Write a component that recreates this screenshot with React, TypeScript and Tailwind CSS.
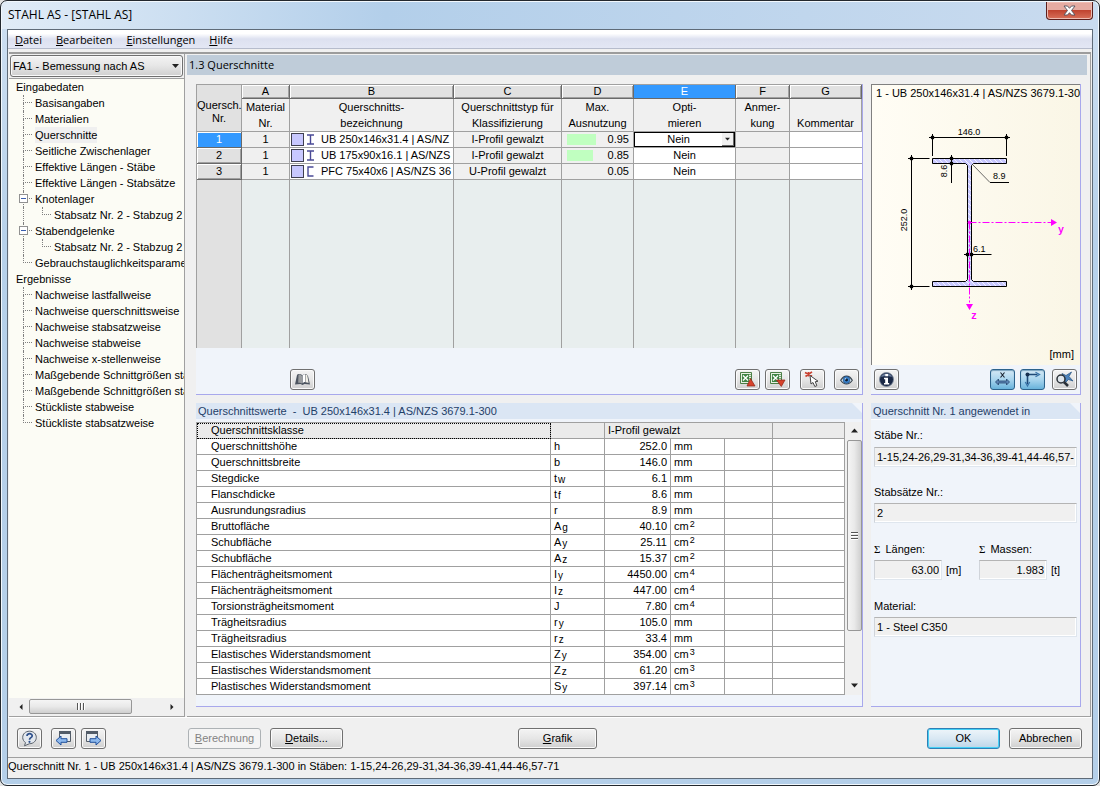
import React, { useState } from 'react';

interface TreeItem {
  label: string;
  depth: 0 | 1 | 2;
  last?: boolean;
  open?: boolean;
}

interface Section {
  nr: number;
  material: number;
  shape: 'I' | 'U';
  name: string;
  type: string;
  ratio: string;
}

interface Property {
  name: string;
  symbol: string;
  sub?: string;
  value: string;
  unit: string;
  power?: string;
}

const TREE: TreeItem[] = [
  { label: 'Eingabedaten', depth: 0 },
  { label: 'Basisangaben', depth: 1 },
  { label: 'Materialien', depth: 1 },
  { label: 'Querschnitte', depth: 1 },
  { label: 'Seitliche Zwischenlager', depth: 1 },
  { label: 'Effektive Längen - Stäbe', depth: 1 },
  { label: 'Effektive Längen - Stabsätze', depth: 1 },
  { label: 'Knotenlager', depth: 1, open: true },
  { label: 'Stabsatz Nr. 2 - Stabzug 2', depth: 2, last: true },
  { label: 'Stabendgelenke', depth: 1, open: true },
  { label: 'Stabsatz Nr. 2 - Stabzug 2', depth: 2, last: true },
  { label: 'Gebrauchstauglichkeitsparamet', depth: 1, last: true },
  { label: 'Ergebnisse', depth: 0 },
  { label: 'Nachweise lastfallweise', depth: 1 },
  { label: 'Nachweise querschnittsweise', depth: 1 },
  { label: 'Nachweise stabsatzweise', depth: 1 },
  { label: 'Nachweise stabweise', depth: 1 },
  { label: 'Nachweise x-stellenweise', depth: 1 },
  { label: 'Maßgebende Schnittgrößen sta', depth: 1 },
  { label: 'Maßgebende Schnittgrößen sta', depth: 1 },
  { label: 'Stückliste stabweise', depth: 1 },
  { label: 'Stückliste stabsatzweise', depth: 1, last: true },
];

const COLUMNS = [
  { letter: 'A', lines: ['Material', 'Nr.'] },
  { letter: 'B', lines: ['Querschnitts-', 'bezeichnung'] },
  { letter: 'C', lines: ['Querschnittstyp für', 'Klassifizierung'] },
  { letter: 'D', lines: ['Max.', 'Ausnutzung'] },
  { letter: 'E', lines: ['Opti-', 'mieren'] },
  { letter: 'F', lines: ['Anmer-', 'kung'] },
  { letter: 'G', lines: ['', 'Kommentar'] },
];

const SECTIONS: Section[] = [
  { nr: 1, material: 1, shape: 'I', name: 'UB 250x146x31.4 | AS/NZ', type: 'I-Profil gewalzt', ratio: '0.95' },
  { nr: 2, material: 1, shape: 'I', name: 'UB 175x90x16.1 | AS/NZS', type: 'I-Profil gewalzt', ratio: '0.85' },
  { nr: 3, material: 1, shape: 'U', name: 'PFC 75x40x6 | AS/NZS 36', type: 'U-Profil gewalzt', ratio: '0.05' },
];

const PROPERTIES: Property[] = [
  { name: 'Querschnittshöhe', symbol: 'h', value: '252.0', unit: 'mm' },
  { name: 'Querschnittsbreite', symbol: 'b', value: '146.0', unit: 'mm' },
  { name: 'Stegdicke', symbol: 't', sub: 'w', value: '6.1', unit: 'mm' },
  { name: 'Flanschdicke', symbol: 't', sub: 'f', value: '8.6', unit: 'mm' },
  { name: 'Ausrundungsradius', symbol: 'r', value: '8.9', unit: 'mm' },
  { name: 'Bruttofläche', symbol: 'A', sub: 'g', value: '40.10', unit: 'cm', power: '2' },
  { name: 'Schubfläche', symbol: 'A', sub: 'y', value: '25.11', unit: 'cm', power: '2' },
  { name: 'Schubfläche', symbol: 'A', sub: 'z', value: '15.37', unit: 'cm', power: '2' },
  { name: 'Flächenträgheitsmoment', symbol: 'I', sub: 'y', value: '4450.00', unit: 'cm', power: '4' },
  { name: 'Flächenträgheitsmoment', symbol: 'I', sub: 'z', value: '447.00', unit: 'cm', power: '4' },
  { name: 'Torsionsträgheitsmoment', symbol: 'J', value: '7.80', unit: 'cm', power: '4' },
  { name: 'Trägheitsradius', symbol: 'r', sub: 'y', value: '105.0', unit: 'mm' },
  { name: 'Trägheitsradius', symbol: 'r', sub: 'z', value: '33.4', unit: 'mm' },
  { name: 'Elastisches Widerstandsmoment', symbol: 'Z', sub: 'y', value: '354.00', unit: 'cm', power: '3' },
  { name: 'Elastisches Widerstandsmoment', symbol: 'Z', sub: 'z', value: '61.20', unit: 'cm', power: '3' },
  { name: 'Plastisches Widerstandsmoment', symbol: 'S', sub: 'y', value: '397.14', unit: 'cm', power: '3' },
];

const raised = 'border border-[#707070] rounded-[3px] bg-linear-to-b from-[#f4f4f4] via-[#e6e6e6] to-[#cfcfcf] shadow-[inset_0_0_0_1px_#fafafa]';
const pressed = 'border border-[#2c628b] rounded-[3px] bg-linear-to-b from-[#d5e9f5] via-[#a9d5ee] to-[#68b3db] shadow-[inset_0_1px_1px_#7ba4bf]';
const line = 'border-[#a0a0a0]';
const bevel = 'bg-[#e1e1e1] border-[#696969] shadow-[inset_1px_1px_0_#ffffff,inset_-1px_-1px_0_#a0a0a0]';

const IconButton: React.FC<{ label: string; className?: string; active?: boolean; children: React.ReactNode }> = ({ label, className = '', active, children }) => (
  <button type="button" aria-label={label} className={`flex h-[21px] w-[25px] shrink-0 items-center justify-center ${active ? pressed : raised} ${className}`}>
    {children}
  </button>
);

const BookIcon = () => (
  <svg width="17" height="15" viewBox="0 0 17 15">
    <path d="M1 12.5 3 3 4 2l3 .3 1.5 1.2L10 2l2.500 .3L14 4l2 8.500-5.500-.5-2 1-2-1z" fill="#4d5560" />
    <path d="M4.500 2.500c1.500-.3 3 .2 3.500 1.500v7.500c-1-1-2.500-1-3.800-.7z" fill="#9a9d9f" />
    <path d="M8.600 4c.4-1.400 1.500-2 2.500-1.700V10c-1 0-2 .5-2.500 1.500z" fill="#fff" />
    <path d="M11.500 2.500c.8 0 1.400.3 1.800 1l1.300 7.500c-1-.6-2-.8-3.100-.8z" fill="#f3f1e8" />
  </svg>
);

const ExcelIcon: React.FC<{ dir: 'up' | 'down' }> = ({ dir }) => (
  <svg width="17" height="17" viewBox="0 0 17 17">
    <path d="M1.500 1.500h11v11h-11z" fill="#e8f0e4" stroke="#4c7f46" />
    <path d="M10 3.500h2M10 5.500h2M10 7.500h2" stroke="#79a373" />
    <path d="M3 3h7v8H3z" fill="#3f8443" />
    <path d="m4 4.500 5 5m0-5-5 5" stroke="#fff" strokeWidth="1.400" />
    {dir === 'up' ? (
      <path d="M11.500 7.500 16 15H8z" fill="#d6422b" stroke="#8c2415" strokeWidth=".7" />
    ) : (
      <path d="M7.500 9H16l-3.700 6.500z" fill="#d6422b" stroke="#8c2415" strokeWidth=".7" />
    )}
  </svg>
);

const PickIcon = () => (
  <svg width="17" height="17" viewBox="0 0 17 17">
    <path d="M1 1.500 8 5M8 .8 1.500 5.500M4.500 1v4.500" stroke="#c9402f" strokeWidth="1.600" />
    <path d="M6 4.500 7 13l2-1.500 1.800 4 2-.8-1.500-4 2.700-.5z" fill="#fff" stroke="#444" />
  </svg>
);

const EyeIcon = () => (
  <svg width="13" height="10" viewBox="0 0 15 11">
    <path d="M.8 5.800C3 2.200 5 1 7.500 1s4.700 1.200 6.700 4.800C12.200 8.800 10 10 7.500 10S2.800 8.800.8 5.800z" fill="#dbe7ef" stroke="#38434d" strokeWidth="1.300" />
    <circle cx="7.500" cy="5.400" r="3.900" fill="#3d86cf" stroke="#1d4a82" strokeWidth=".7" />
    <circle cx="7.500" cy="5.400" r="1.700" fill="#0b1a30" />
    <circle cx="6.500" cy="4.200" r=".8" fill="#fff" />
  </svg>
);

const InfoIcon = () => (
  <svg width="17" height="17" viewBox="0 0 17 17">
    <circle cx="8.500" cy="8.500" r="7" fill="#1b2946" stroke="#7a8799" strokeWidth=".8" />
    <path d="M3 6a6 6 0 0 1 11 0c-4-1.500-7-1.500-11 0z" fill="#6c7f9f" />
    <path d="M7.300 3h2.700v2.300H7.300zM6 6.800h4V12h1.200v1.500H6V12h1.200V8.300H6z" fill="#fff" />
  </svg>
);

const DimensionIcon = () => (
  <svg width="17" height="17" viewBox="0 0 17 17">
    <path d="m6.500 1.500 4 5m0-5-4 5" stroke="#17202c" strokeWidth="1.100" />
    <path d="m1.500 11 3-3v2h8V8l3 3-3 3v-2h-8v2z" fill="#5c86b5" stroke="#27456e" strokeWidth=".8" />
  </svg>
);

const AxesIcon = () => (
  <svg width="19" height="17" viewBox="0 0 19 17">
    <path d="M4.500 3.500h10M4.500 3.500V13" stroke="#1f4a77" strokeWidth="1.600" />
    <path d="m12.500 1.200 4 2.300-4 2.300M2.300 11l2.200 4 2.200-4" fill="none" stroke="#3974a9" strokeWidth="1.300" />
    <circle cx="4.500" cy="3.500" r="2" fill="#17304f" />
  </svg>
);

const ZoomAllIcon = () => (
  <svg width="19" height="17" viewBox="0 0 19 17">
    <path d="m7 2.500 4 2 5.500-3.500-2.500 4.500L18 10l-4.500-1.500L9 13l1-5z" fill="#4d83bd" stroke="#23527f" strokeWidth=".7" />
    <circle cx="6" cy="8" r="4" fill="#dce6ee" fillOpacity=".7" stroke="#2b3138" strokeWidth="1.500" />
    <path d="m9 11 4 4" stroke="#2b3138" strokeWidth="2.500" />
  </svg>
);

const HelpIcon = () => (
  <svg width="17" height="17" viewBox="0 0 17 17">
    <path d="M8.500 1.200c4 0 6.800 2.700 6.800 6.200s-2.800 6.300-6.800 6.300L3.500 15.800l1-3.200C2.800 11.500 1.700 9.700 1.700 7.400c0-3.500 2.800-6.200 6.800-6.200z" fill="#e3e8ee" stroke="#59616b" />
    <path d="M6 6c0-3.200 5.400-3 5.200 0C11 7.800 8.500 7.600 8.500 9.700" fill="none" stroke="#2d4f8b" strokeWidth="1.700" />
    <circle cx="8.500" cy="11.800" r="1.100" fill="#2d4f8b" />
  </svg>
);

const StepIcon: React.FC<{ dir: 'back' | 'next' }> = ({ dir }) => (
  <svg width="17" height="17" viewBox="0 0 17 17">
    <path d={dir === 'back' ? 'M4.500 1.500h11v10h-11z' : 'M1.500 1.500h11v10h-11z'} fill="#e9edf1" stroke="#525c68" />
    <path d={dir === 'back' ? 'M4 1h12v3H4z' : 'M1 1h12v3H1z'} fill="#525c68" />
    {dir === 'back' ? (
      <path d="M1 10.500 6 6v2.700h6v3.600H6V15z" fill="#8db9ee" stroke="#20509c" />
    ) : (
      <path d="M16 10.500 11 6v2.700H5v3.600h6V15z" fill="#8db9ee" stroke="#20509c" />
    )}
  </svg>
);

const ShapeIcon: React.FC<{ shape: 'I' | 'U' }> = ({ shape }) => (
  <svg width="9" height="11" viewBox="0 0 9 11" className="ml-[2px] shrink-0">
    <path d={shape === 'I' ? 'M1 1h7M1 10h7M4.500 1v9' : 'M7.500 1H2v9h5.500'} fill="none" stroke="#4a4a96" strokeWidth="1.400" />
  </svg>
);

const Caret: React.FC<{ className?: string; d?: string }> = ({ className = '', d = 'M0 0h7L3.500 4z' }) => (
  <svg width="7" height="7" viewBox="0 -1 7 7" className={className}>
    <path d={d} fill="#222" />
  </svg>
);

const Branch: React.FC<{ last?: boolean }> = ({ last }) => (
  <span className="mr-[3px] flex h-4 w-[9px] shrink-0 flex-col">
    <span className="h-2 border-b border-l border-dotted border-[#808080]" />
    {!last && <span className="h-2 border-l border-dotted border-[#808080]" />}
  </span>
);

const Sidebar: React.FC = () => {
  const [selected, setSelected] = useState(3);

  return (
    <aside className="flex w-[176px] shrink-0 flex-col border-r border-b border-[#a0a0a0] bg-[#f0f0f0]">
      <div className="relative m-px mb-0 h-[22px]">
        <select aria-label="Bemessungsfall" className={`h-full w-full appearance-none px-[2px] text-[11px] ${raised}`}>
          <option>FA1 - Bemessung nach AS</option>
        </select>
        <Caret className="pointer-events-none absolute top-2 right-1" />
      </div>
      <ul className={`mt-px flex-1 overflow-hidden border-t bg-[#fcfcf5] ${line}`}>
        {TREE.map((item, i) => (
          <li key={i} className={`relative flex h-4 ${item.depth === 0 ? 'pl-[7px]' : 'pl-[14px]'}`}>
            {item.depth === 1 && <Branch last={item.last} />}
            {item.depth === 2 && (
              <>
                <span className="w-[19px] shrink-0 border-l border-dotted border-[#808080]" />
                <Branch last={item.last} />
              </>
            )}
            {item.open && (
              <span className="absolute top-[3px] left-[10px] flex size-[9px] items-center justify-center border border-[#919191] bg-white">
                <span className="h-px w-[5px] bg-[#3b5fae]" />
              </span>
            )}
            <button
              type="button"
              onClick={() => setSelected(i)}
              className={`h-4 whitespace-nowrap leading-4 ${selected === i ? 'bg-[#f0f0f0]' : ''}`}
            >
              {item.label}
            </button>
          </li>
        ))}
      </ul>
      <div className="mb-px flex h-[17px] items-center bg-[#f0f0f0] px-1">
        <Caret className="w-[16px]" d="M5 0v6L2 3z" />
        <div className="flex h-[15px] w-[103px] items-center justify-center gap-px rounded-[2px] border border-[#979797] bg-linear-to-b from-[#f5f5f5] via-[#e9e9e9] to-[#cfcfcf]">
          {[0, 1, 2].map((n) => (
            <span key={n} className="h-[7px] w-[2px] border-l border-[#555] bg-white" />
          ))}
        </div>
        <Caret className="ml-auto w-[16px]" d="M2 0v6L5 3z" />
      </div>
    </aside>
  );
};

const SectionTable: React.FC = () => (
  <table className={`w-full table-fixed border-separate border-spacing-0 border-t border-l text-center leading-[15px] ${line}`}>
    <colgroup>
      <col className="w-[45px]" />
      <col className="w-[48px]" />
      <col />
      <col className="w-[108px]" />
      <col className="w-[72px]" />
      <col className="w-[102px]" />
      <col className="w-[54px]" />
      <col className="w-[72px]" />
    </colgroup>
    <thead>
      <tr className="h-[14px]">
        <th rowSpan={2} className={`border-r border-b bg-[#e1e1e1] p-0 pt-2 font-normal leading-[13px] ${line}`}>
          Quersch.<br />Nr.
        </th>
        {COLUMNS.map((c) => (
          <th key={c.letter} className={`h-[14px] border-r border-b p-0 font-normal leading-[13px] ${c.letter === 'E' ? 'border-[#696969] bg-[#3399ff] text-white' : bevel}`}>
            {c.letter}
          </th>
        ))}
      </tr>
      <tr>
        {COLUMNS.map((c) => (
          <th key={c.letter} className={`h-[33px] border-r border-b bg-[#f0f0f0] p-0 align-top font-normal whitespace-nowrap leading-4 ${line}`}>
            {c.lines[0] || '\u00a0'}<br />{c.lines[1]}
          </th>
        ))}
      </tr>
    </thead>
    <tbody>
      {SECTIONS.map((s, i) => (
        <tr key={s.nr} className="h-4">
          <th className={`border-r border-b p-0 font-normal ${i === 0 ? 'border-[#696969] bg-[#3399ff] text-white shadow-[inset_1px_1px_0_#ffffff]' : bevel}`}>{s.nr}</th>
          <td className={`border-r border-b bg-[#f0f0f0] p-0 ${line}`}>{s.material}</td>
          <td className={`border-r border-b bg-white p-0 ${line}`}>
            <div className="flex h-[15px] items-center overflow-hidden pl-px whitespace-nowrap">
              <span className="size-[13px] shrink-0 border border-[#404050] bg-[#c8c8ff]" />
              <ShapeIcon shape={s.shape} />
              <span className="ml-[6px]">{s.name}</span>
            </div>
          </td>
          <td className={`border-r border-b bg-[#f0f0f0] p-0 ${line}`}>{s.type}</td>
          <td className={`border-r border-b bg-[#f0f0f0] p-0 ${line}`}>
            <div className="flex h-[15px] items-center justify-between px-[4px] pl-[5px]">
              <span className="h-[11px] bg-[#c0ffc0]" style={{ width: Number(s.ratio) > 0.1 ? Math.round(Number(s.ratio) * 30) : 0 }} />
              {s.ratio}
            </div>
          </td>
          <td className={`border-r border-b bg-white p-0 ${line}`}>
            {i === 0 ? (
              <div className="flex h-[15px] border border-black">
                <select aria-label="Optimieren" className="h-[13px] min-w-0 flex-1 appearance-none text-center text-[11px] leading-[13px]">
                  <option>Nein</option>
                  <option>Ja</option>
                </select>
                <span className="flex h-[13px] w-[12px] items-center justify-center border-r border-b border-[#696969] bg-[#f0f0f0]">
                  <Caret className="h-[7px] w-[5px]" />
                </span>
              </div>
            ) : (
              'Nein'
            )}
          </td>
          <td className={`border-r border-b bg-[#f0f0f0] p-0 ${line}`} />
          <td className={`border-b bg-white p-0 ${line}`} />
        </tr>
      ))}
      <tr>
        <td className={`h-[168px] border-r bg-[#e1e1e1] ${line}`} />
        {COLUMNS.map((c) => (
          <td key={c.letter} className={`bg-[#e8eeee] ${c.letter === 'G' ? '' : 'border-r'} ${line}`} />
        ))}
      </tr>
    </tbody>
  </table>
);

const PropertyTable: React.FC = () => {
  const cell = `border-r border-b px-[3px] py-0 ${line}`;
  return (
    <table className={`min-w-0 flex-1 table-fixed border-separate border-spacing-0 border-t border-l bg-white leading-[15px] ${line}`}>
      <colgroup>
        <col />
        <col className="w-[54px]" />
        <col className="w-[66px]" />
        <col className="w-[54px]" />
        <col className="w-[48px]" />
        <col className="w-[72px]" />
      </colgroup>
      <tbody>
        <tr className="h-4 bg-[#ebebeb]">
          <td className={`border-r border-b p-0 pl-[14px] outline-1 -outline-offset-1 outline-dotted outline-black ${line}`}>Querschnittsklasse</td>
          <td className={cell} />
          <td colSpan={3} className={cell}>I-Profil gewalzt</td>
          <td className={cell} />
        </tr>
        {PROPERTIES.map((p, i) => (
          <tr key={i} className="h-4">
            <td className={`border-r border-b p-0 pl-[14px] ${line}`}>{p.name}</td>
            <td className={cell}>
              <div className="flex h-[15px] gap-px">
                {p.symbol}
                {p.sub && <span className="pt-[2px] text-[10px] leading-[13px]">{p.sub}</span>}
              </div>
            </td>
            <td className={`${cell} text-right`}>{p.value}</td>
            <td className={cell}>
              <div className="flex h-[15px] gap-px">
                {p.unit}
                {p.power && <span className="text-[9px] leading-[11px]">{p.power}</span>}
              </div>
            </td>
            <td className={cell} />
            <td className={cell} />
          </tr>
        ))}
      </tbody>
    </table>
  );
};

// Dimensioned drawing of the selected profile, one unit per pixel.
const ProfileDrawing: React.FC = () => {
  const ticks = [[60.5, 35.5], [134.5, 35.5], [39.5, 56.5], [39.5, 184.5], [79.5, 56.5], [79.5, 61.5], [95.5, 152.5], [99.5, 152.5]];
  return (
    <svg viewBox="0 0 208 244" className="h-[244px] w-full" fontFamily="'Liberation Sans', Arial, sans-serif" fontSize="9">
      <defs>
        <pattern id="hatch" width="5" height="5" patternUnits="userSpaceOnUse">
          <path d="M0 0h5v5H0z" fill="#c8c8ff" />
          <path d="m-1-1 7 7" stroke="#fff" strokeWidth=".8" />
        </pattern>
      </defs>
      <path
        d="M60.500 56.500h74v5H101.500l-2 2v114l2 2h33v5h-74v-5h33l2-2v-114l-2-2h-33z"
        fill="url(#hatch)"
        stroke="#000"
      />
      <g stroke="#000" fill="none">
        <path d="M57 35.500h81M60.500 32v22M134.500 32v22" />
        <path d="M39.500 53v135M36 56.500h21.500M36 184.500h21.500" />
        <path d="M79.500 53v28" />
        <path d="M92 152.500h27.500" />
        <path d="M118 80.500h19" />
        <path d="m100 62 18 18.500" stroke="#444" strokeWidth=".8" />
      </g>
      {ticks.map(([x, y]) => (
        <circle key={`${x}-${y}`} cx={x} cy={y} r="1.900" />
      ))}
      <text x="97" y="33" textAnchor="middle">146.0</text>
      <text transform="translate(35 118) rotate(-90)" textAnchor="middle">252.0</text>
      <text transform="translate(75 69) rotate(-90)" textAnchor="middle">8.6</text>
      <text x="121" y="77">8.9</text>
      <text x="101" y="150">6.1</text>
      <g stroke="#ff00ff" fill="#ff00ff">
        <path d="M97.500 120.500h82M97.500 120.500v80" fill="none" strokeDasharray="7 2 2 2" />
        <path d="M179 117v7l6-3.500zM94 202h7l-3.500 6z" stroke="none" />
        <circle cx="97.500" cy="120.500" r="1.800" stroke="none" />
      </g>
      <g fill="#ff00ff" fontFamily="'Liberation Mono', monospace" fontSize="10" fontWeight="bold">
        <text x="186" y="131">y</text>
        <text x="99" y="217">z</text>
      </g>
    </svg>
  );
};

const PanelTitle: React.FC<{ children: React.ReactNode }> = ({ children }) => (
  <h2 className="h-4 bg-[#dbe6f4] pl-[2px] leading-4 text-[#1f4068] [clip-path:polygon(0_0,calc(100%-10px)_0,100%_10px,100%_100%,0_100%)]">
    {children}
  </h2>
);

const panel = 'flex flex-col border-r border-b border-[#a8a8ec] bg-[#f0f4fa]';
const field = 'h-5 border border-t-[#b4b4b4] border-r-[#dfe6ee] border-b-[#dfe6ee] border-l-[#d0d4da] bg-[#f0f0f0] px-[2px] text-[11px] shadow-[inset_-1px_-1px_0_#ffffff]';
const pushButton = `h-[21px] shrink-0 ${raised}`;

const UsagePanel: React.FC = () => (
  <section className={`w-[210px] shrink-0 ${panel}`}>
    <PanelTitle>Querschnitt Nr. 1 angewendet in</PanelTitle>
    <div className="flex flex-col border-t border-white px-[3px] pt-[7px]">
      <label htmlFor="members" className="h-5 leading-4">Stäbe Nr.:</label>
      <input id="members" readOnly defaultValue="1-15,24-26,29-31,34-36,39-41,44-46,57-71" className={field} />
      <label htmlFor="sets" className="mt-[17px] h-[19px] leading-4">Stabsätze Nr.:</label>
      <input id="sets" readOnly defaultValue="2" className={field} />
      <div className="mt-[18px] flex">
        <div className="w-[105px]">
          <label htmlFor="lengths" className="block h-[19px] leading-4"><span className="pr-[5px] font-['Liberation_Serif']">Σ</span>Längen:</label>
          <input id="lengths" readOnly defaultValue="63.00" className={`w-[68px] text-right ${field}`} />
          <span className="pl-[4px]">[m]</span>
        </div>
        <div>
          <label htmlFor="masses" className="block h-[19px] leading-4"><span className="pr-[5px] font-['Liberation_Serif']">Σ</span>Massen:</label>
          <input id="masses" readOnly defaultValue="1.983" className={`w-[68px] text-right ${field}`} />
          <span className="pl-[4px]">[t]</span>
        </div>
      </div>
      <label htmlFor="material" className="mt-[18px] h-[19px] leading-4">Material:</label>
      <input id="material" readOnly defaultValue="1 - Steel C350" className={field} />
    </div>
  </section>
);

const App: React.FC = () => {
  return (
    <div className="bg-[#e4e4e4]">
      <div className="flex min-h-screen flex-col rounded-[7px] border border-[#23282e] bg-linear-to-b from-[#cfe0f2] via-[#b7d1ea] via-30% to-[#b4cfe9] px-[6px] pb-[6px] font-['Liberation_Sans',Arial,sans-serif] text-[11px] text-black shadow-[inset_0_0_0_1px_#f2f8fd]">
        <header className="-mx-[5px] mt-px flex h-[27px] items-start rounded-t-[6px] bg-linear-to-r from-[#e1ecf7] via-[#b3cfea] via-35% to-[#c9dbef] pl-[6px]">
          <h1 className="font-['Open_Sans',sans-serif] text-[12px] leading-[26px]">STAHL AS - [STAHL AS]</h1>
          <button type="button" aria-label="Schließen" className="mr-[5px] ml-auto flex h-[18px] w-[47px] items-center justify-center rounded-b-[4px] border border-t-0 border-[#5c1f1c] bg-linear-to-b from-[#e5aba2] from-45% via-[#c04430] via-50% to-[#d8705a] shadow-[inset_0_0_0_1px_#eebcb2]">
            <svg width="13" height="11" viewBox="0 0 13 11">
              <path d="M1 1h3.500l2 2.300L8.500 1H12L8.500 5.500 12 10H8.500l-2-2.300L4.500 10H1l3.500-4.500z" fill="#fff" stroke="#50505c" strokeWidth=".9" />
            </svg>
          </button>
        </header>

        <div className="flex flex-1 flex-col border border-[#5f6b78] bg-[#f0f0f0]">
          <nav className="flex h-[19px] gap-[14px] border-b border-[#b6bccc] bg-linear-to-b from-white from-20% via-[#dde1f0] via-50% to-[#e3e7f4] pl-[7px] font-['Open_Sans',sans-serif] text-[11px] leading-[20px]">
            <button type="button"><u>D</u>atei</button>
            <button type="button"><u>B</u>earbeiten</button>
            <button type="button"><u>E</u>instellungen</button>
            <button type="button"><u>H</u>ilfe</button>
          </nav>

          <div className="mx-px mt-[3px] flex flex-1 border-t-2 border-[#9c9c9c]">
            <Sidebar />
            <main className="ml-[2px] flex min-w-0 flex-1 flex-col border-r border-b border-[#a0a0a0] pt-px pr-[3px]">
              <h2 className="h-5 bg-[#bfccd9] pl-[2px] font-['Open_Sans',sans-serif] text-[11px] leading-5">1.3 Querschnitte</h2>
              <div className="flex flex-1 flex-col gap-2 pt-[9px] pr-[6px] pb-[9px] pl-[9px]">
                <div className="flex gap-2">
                  <section className={`min-w-0 flex-1 ${panel}`}>
                    <SectionTable />
                    <div className="flex pt-[21px] pr-[3px] pb-1 pl-[94px]">
                      <IconButton label="Bibliothek"><BookIcon /></IconButton>
                      <IconButton label="Export" className="mr-[5px] ml-auto"><ExcelIcon dir="up" /></IconButton>
                      <IconButton label="Import" className="mr-[10px]"><ExcelIcon dir="down" /></IconButton>
                      <IconButton label="Auswählen" className="mr-[9px]"><PickIcon /></IconButton>
                      <IconButton label="Ansicht"><EyeIcon /></IconButton>
                    </div>
                  </section>
                  <section className={`w-[210px] shrink-0 ${panel}`}>
                    <div className="border-t border-l border-[#808080] bg-linear-to-r from-[#fffdf5] to-[#faf6e6]">
                      <p className="h-[17px] overflow-hidden pl-1 leading-4 whitespace-nowrap">1 - UB 250x146x31.4 | AS/NZS 3679.1-300</p>
                      <ProfileDrawing />
                      <p className="h-[19px] pr-[6px] text-right leading-4">[mm]</p>
                    </div>
                    <div className="flex pt-1 pr-[3px] pl-[3px]">
                      <IconButton label="Info" className="mr-auto"><InfoIcon /></IconButton>
                      <IconButton label="Bemaßung" active className="mr-[5px]"><DimensionIcon /></IconButton>
                      <IconButton label="Achsen" active className="mr-[7px]"><AxesIcon /></IconButton>
                      <IconButton label="Alles zeigen"><ZoomAllIcon /></IconButton>
                    </div>
                  </section>
                </div>

                <div className="flex flex-1 gap-2">
                  <section className={`min-w-0 flex-1 ${panel}`}>
                    <PanelTitle>
                      <span className="whitespace-pre">{'Querschnittswerte  -  UB 250x146x31.4 | AS/NZS 3679.1-300'}</span>
                    </PanelTitle>
                    <div className="mt-[3px] flex">
                      <PropertyTable />
                      <div className="flex w-[17px] flex-col items-center bg-[#f0f0f0] pl-px">
                        <Caret className="h-[18px]" d="M0 4h7L3.500 0z" />
                        <div className="flex h-[191px] w-[15px] flex-col items-center justify-center gap-px rounded-[2px] border border-[#979797] bg-linear-to-r from-[#f5f5f5] via-[#e9e9e9] to-[#cfcfcf]">
                          {[0, 1, 2].map((n) => (
                            <span key={n} className="h-[2px] w-[7px] border-t border-[#555] bg-white" />
                          ))}
                        </div>
                        <Caret className="mt-auto h-[18px]" />
                      </div>
                    </div>
                  </section>
                  <UsagePanel />
                </div>
              </div>
            </main>
          </div>

          <div className="flex h-10 items-center border-t border-white px-[10px] pt-[2px] pl-[9px]">
            <IconButton label="Hilfe" className="mr-[9px]"><HelpIcon /></IconButton>
            <IconButton label="Zurück" className="mr-[5px]"><StepIcon dir="back" /></IconButton>
            <IconButton label="Weiter"><StepIcon dir="next" /></IconButton>
            <button type="button" disabled className="ml-[82px] h-[21px] w-[73px] rounded-[3px] border border-[#adb2b5] bg-[#f4f4f4] text-[#838383]"><u>B</u>erechnung</button>
            <button type="button" className={`ml-[9px] w-[73px] ${pushButton}`}><u>D</u>etails...</button>
            <button type="button" className={`mx-auto w-[79px] ${pushButton}`}><u>G</u>rafik</button>
            <div className="flex w-[310px] shrink-0 justify-end gap-[9px]">
              <button type="button" className="h-[21px] w-[73px] rounded-[3px] border border-[#2f7fb5] bg-linear-to-b from-[#eef5fa] via-[#d9e8f3] to-[#bcd5e8] shadow-[inset_0_0_0_1px_#45d0f5]">OK</button>
              <button type="button" className={`w-[73px] ${pushButton}`}>Abbrechen</button>
            </div>
          </div>
          <footer className={`h-[21px] border-t leading-4 whitespace-nowrap ${line}`}>
            Querschnitt Nr. 1 - UB 250x146x31.4 | AS/NZS 3679.1-300 in Stäben: 1-15,24-26,29-31,34-36,39-41,44-46,57-71
          </footer>
        </div>
      </div>
    </div>
  );
};

export default App;
